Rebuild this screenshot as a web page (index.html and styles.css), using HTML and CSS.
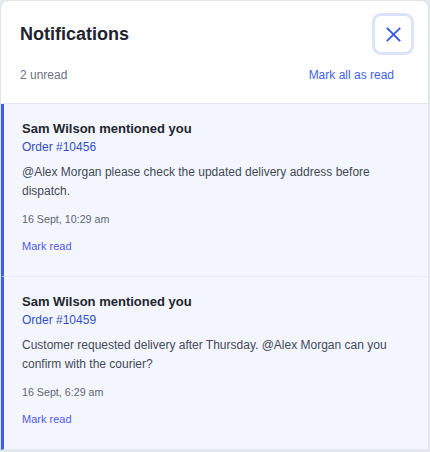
FILE: index.html
```html
<!DOCTYPE html>
<html lang="en">
<head>
<meta charset="utf-8">
<title>Notifications</title>
<link rel="stylesheet" href="styles.css">
</head>
<body>
<div class="panel">
  <header class="header">
    <div class="top-row">
      <h1 class="title">Notifications</h1>
      <button class="close" aria-label="Close">
        <svg width="15" height="15" viewBox="0 0 15 15"><path d="M1.5 1.5 L13.5 13.5 M13.5 1.5 L1.5 13.5" stroke="#3b5ee8" stroke-width="1.9" stroke-linecap="square" fill="none"/></svg>
      </button>
    </div>
    <div class="sub-row">
      <span class="count">2 unread</span>
      <a class="mark-all">Mark all as read</a>
    </div>
  </header>
  <ul class="list">
    <li class="item">
      <div class="item-title">Sam Wilson mentioned you</div>
      <div class="order">Order #10456</div>
      <p class="msg">@Alex Morgan please check the updated delivery address before dispatch.</p>
      <div class="date">16 Sept, 10:29 am</div>
      <a class="mark">Mark read</a>
    </li>
    <li class="item">
      <div class="item-title">Sam Wilson mentioned you</div>
      <div class="order">Order #10459</div>
      <p class="msg">Customer requested delivery after Thursday. @Alex Morgan can you confirm with the courier?</p>
      <div class="date">16 Sept, 6:29 am</div>
      <a class="mark">Mark read</a>
    </li>
  </ul>
</div>
</body>
</html>
```

FILE: styles.css
```css
* { box-sizing: border-box; }
html, body { margin: 0; padding: 0; }
body {
  background: #e6e8ec;
  font-family: "Liberation Sans", Arial, sans-serif;
  width: 430px;
  height: 452px;
  overflow: hidden;
}
.panel {
  width: 429px;
  background: #ffffff;
  border: 1px solid #dfe3ea;
  border-radius: 8px 8px 0 0;
  overflow: hidden;
}
.header {
  padding: 12px 14px 20px 19px;
  border-bottom: 1px solid #e3e7ef;
}
.top-row {
  display: flex;
  align-items: center;
  justify-content: space-between;
  height: 42px;
}
.title {
  margin: 0;
  font-size: 18px;
  font-weight: 700;
  color: #1f2430;
  line-height: 22px;
}
.close {
  width: 42px;
  height: 42px;
  padding: 0;
  background: #ffffff;
  border: 3px solid #dce4fd;
  border-radius: 9px;
  display: flex;
  align-items: center;
  justify-content: center;
}
.sub-row {
  margin-top: 12px;
  display: flex;
  justify-content: space-between;
  align-items: center;
  height: 16px;
  font-size: 12px;
  line-height: 16px;
}
.count { color: #6b7280; }
.mark-all { color: #3f63ea; margin-right: 20px; }
.list {
  list-style: none;
  margin: 0;
  padding: 0;
}
.item {
  background: #f3f6ff;
  border-left: 3px solid #3d5ff0;
  border-bottom: 1px solid #e7ebf4;
  padding: 16px 18px 23px 18px;
}
.item-title {
  font-size: 13px;
  font-weight: 700;
  color: #23262d;
  line-height: 17px;
}
.order {
  margin-top: 2px;
  font-size: 12px;
  line-height: 16px;
  color: #3450c4;
}
.msg {
  margin: 8px 0 0;
  font-size: 12px;
  line-height: 19px;
  color: #444a56;
}
.date {
  margin-top: 11px;
  font-size: 10.7px;
  line-height: 14px;
  color: #5f6673;
}
.mark {
  display: block;
  margin-top: 13px;
  font-size: 11px;
  line-height: 14px;
  color: #5257ee;
}
```
